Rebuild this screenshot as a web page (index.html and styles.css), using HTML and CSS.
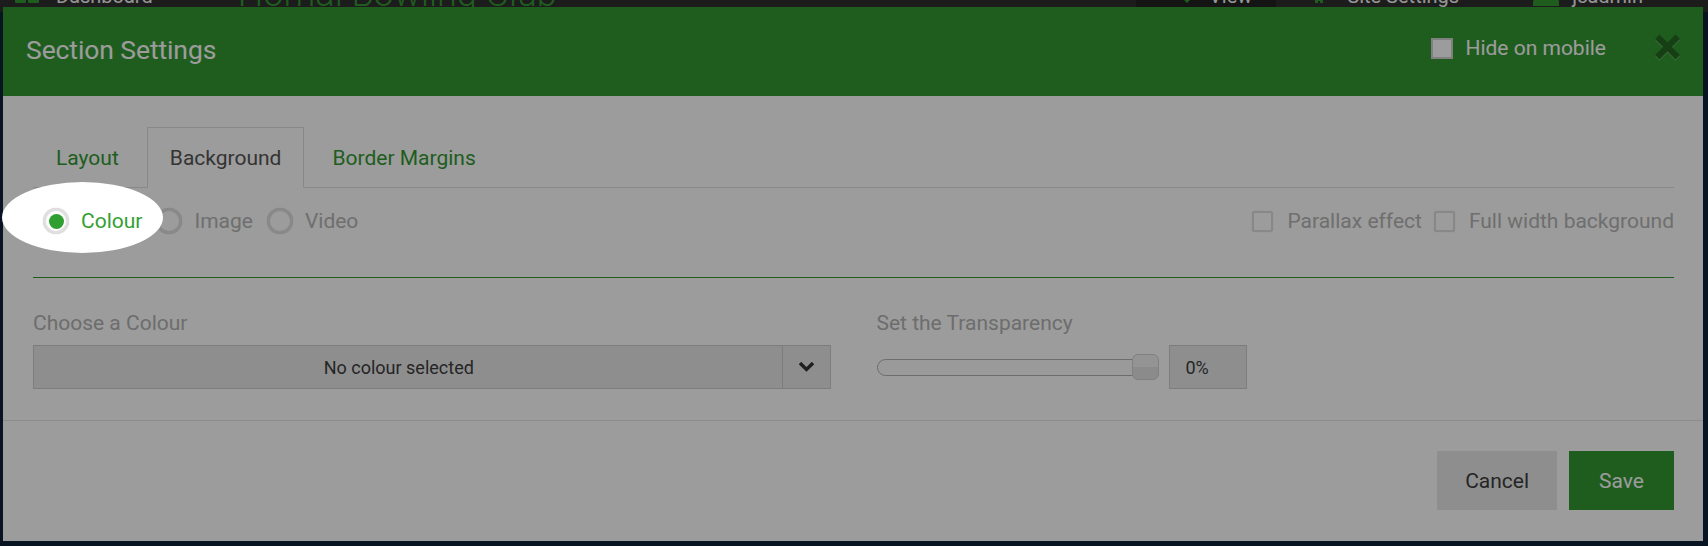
FILE: index.html
```html
<!DOCTYPE html>
<html lang="en">
<head>
<meta charset="utf-8">
<title>Section Settings</title>
<link rel="stylesheet" href="styles.css">
</head>
<body>
  <header class="topbar">
    <span class="nav-dash-icon"><i></i><i></i></span>
    <span class="nav-dash">Dashboard</span>
    <span class="site-title">Hornal Bowling Club</span>
    <nav class="nav-right">
      <span class="nav-item nav-view">
        <svg class="nav-icon" width="10" height="6" viewBox="0 0 10 6"><path d="M0 0 H10 L5 5 Z" fill="#339933"/></svg>
        <span>View</span>
      </span>
      <span class="nav-item nav-settings">
        <svg class="nav-icon" width="14" height="5" viewBox="0 0 14 5"><path d="M0 0 H14 V2 H11 V5 H8 V3 H6 V5 H3 V2 H0 Z" fill="#339933"/></svg>
        <span>Site Settings</span>
      </span>
      <span class="nav-item nav-user">
        <svg class="nav-icon" width="26" height="8" viewBox="0 0 26 8"><path d="M0 8 V4 Q0 0 6 0 H20 Q26 0 26 4 V8 Z" fill="#339933"/></svg>
        <span>jcadmin</span>
      </span>
    </nav>
  </header>

  <div class="modal">
    <div class="modal-header">
      <h1 class="modal-title">Section Settings</h1>
      <label class="hide-mobile"><span class="hm-box"></span>Hide on mobile</label>
      <button class="close" aria-label="Close">
        <svg width="25" height="27" viewBox="0 0 25 27"><path d="M4.5 5 L20.5 21 M20.5 5 L4.5 21" stroke="#246724" stroke-width="6.2" stroke-linecap="square" fill="none"/></svg>
      </button>
    </div>

    <div class="modal-body">
      <ul class="tabs">
        <li class="tab">Layout</li>
        <li class="tab active">Background</li>
        <li class="tab">Border Margins</li>
      </ul>

      <div class="bg-options">
        <div class="radios">
          <span class="radio checked"><span class="circle"><span class="dot"></span></span>Colour</span>
          <span class="radio"><span class="circle"></span>Image</span>
          <span class="radio"><span class="circle"></span>Video</span>
        </div>
        <div class="checks">
          <span class="check"><span class="box"></span>Parallax effect</span>
          <span class="check"><span class="box"></span>Full width background</span>
        </div>
      </div>

      <hr class="rule">

      <div class="fields">
        <div class="field">
          <span class="field-label">Choose a Colour</span>
          <div class="select">
            <span class="select-value">No colour selected</span>
            <span class="select-arrow">
              <svg width="15" height="10" viewBox="0 0 15 10"><path d="M2.2 2.2 L7.5 7.4 L12.8 2.2" stroke="#333" stroke-width="3.4" fill="none" stroke-linecap="square"/></svg>
            </span>
          </div>
        </div>
        <div class="field">
          <span class="field-label">Set the Transparency</span>
          <div class="range-row">
            <div class="slider">
              <span class="track"></span>
              <span class="handle"></span>
            </div>
            <span class="percent">0%</span>
          </div>
        </div>
      </div>
    </div>

    <div class="modal-footer">
      <button class="btn btn-cancel">Cancel</button>
      <button class="btn btn-save">Save</button>
    </div>
  </div>

  <div class="spotlight"></div>
</body>
</html>
```

FILE: styles.css
```css
* { box-sizing: border-box; }

html, body { margin: 0; padding: 0; }

body {
  width: 1708px;
  height: 546px;
  overflow: hidden;
  position: relative;
  background: #10223a;
  font-family: Roboto, "Liberation Sans", Arial, sans-serif;
}

/* ---------- page behind the modal ---------- */
.topbar {
  height: 12px;
  background: #2e2e2e;
  display: flex;
  align-items: flex-end;
  padding-left: 15px;
  color: #f4f4f4;
  line-height: 1;
  font-size: 20px;
}

.nav-dash-icon {
  display: flex;
  gap: 2px;
  margin-bottom: 9px;
}
.nav-dash-icon i {
  display: block;
  width: 11px;
  height: 11px;
  background: #339933;
  border-radius: 1px;
}

.nav-dash {
  margin-left: 17px;
  margin-bottom: 6px;
}

.site-title {
  margin-left: 85px;
  font-size: 36px;
  font-weight: 300;
  color: #339933;
}

.nav-right {
  margin-left: auto;
  margin-right: 65px;
  display: flex;
  align-items: flex-end;
  height: 12px;
}

.nav-item {
  display: flex;
  align-items: flex-end;
  height: 12px;
}
.nav-item span { margin-bottom: 6px; }
.nav-icon { display: block; }

.nav-view {
  background: #222;
  padding: 0 24px 0 46px;
  gap: 17px;
}
.nav-view .nav-icon { margin-bottom: 8px; }

.nav-settings {
  margin-left: 36px;
  gap: 21px;
}
.nav-settings .nav-icon { margin-bottom: 9px; }

.nav-user {
  margin-left: 74px;
  gap: 13px;
}
.nav-user .nav-icon { margin-bottom: 6px; }

/* ---------- modal ---------- */
.modal {
  position: absolute;
  left: 3px;
  top: 7px;
  width: 1700px;
  background: #fff;
}

.modal-header {
  height: 89px;
  background: #339933;
  display: flex;
  align-items: center;
  padding: 0 23px 5px 23px;
  color: #fff;
}

.modal-title {
  flex: 1;
  margin: 0;
  font-size: 26.5px;
  font-weight: 400;
  letter-spacing: -0.1px;
}

.hide-mobile {
  display: flex;
  align-items: center;
  gap: 12px;
  font-size: 21px;
  margin-right: 49px;
  margin-bottom: 2px;
}
.hm-box {
  width: 22px;
  height: 21px;
  background: #fff;
  border: 2px solid #d2d2d2;
}

.close {
  border: 0;
  background: none;
  padding: 0;
  margin-bottom: 3px;
  display: flex;
}
.close svg {
  display: block;
  filter: drop-shadow(0 1px 0 rgba(255, 255, 255, 0.28));
}

.modal-body {
  padding: 31px 29px 31px 30px;
}

/* tabs */
.tabs {
  display: flex;
  list-style: none;
  margin: 0;
  padding: 0;
  border-bottom: 1px solid #dedede;
}
.tab {
  height: 61px;
  margin-bottom: -1px;
  margin-right: 5px;
  padding: 0 22px;
  border: 1px solid transparent;
  display: flex;
  align-items: center;
  font-size: 21px;
  color: #339933;
}
.tab.active {
  border-color: #dedede #dedede #fff;
  background: #fff;
  color: #555;
}

/* background type options */
.bg-options {
  display: flex;
  justify-content: space-between;
  align-items: center;
  height: 26px;
  margin-top: 20px;
}

.radios {
  display: flex;
  gap: 14px;
  padding-left: 10px;
}
.radio {
  display: flex;
  align-items: center;
  gap: 12px;
  font-size: 21px;
  color: #b5b5b5;
}
.radio .circle {
  width: 26px;
  height: 26px;
  border-radius: 50%;
  border: 3px solid #e0e0e0;
  background: #fff;
  box-shadow: 0 0 1px rgba(0, 0, 0, 0.25);
  display: flex;
  align-items: center;
  justify-content: center;
}
.radio .dot {
  width: 15px;
  height: 15px;
  border-radius: 50%;
  background: #2f9f2f;
}
.radio.checked {
  position: relative;
  z-index: 11;
  color: #33a033;
}

.checks {
  display: flex;
  gap: 12px;
}
.check {
  display: flex;
  align-items: center;
  gap: 14px;
  font-size: 21px;
  color: #b5b5b5;
}
.check .box {
  width: 21px;
  height: 21px;
  border: 2px solid #dedede;
  border-radius: 3px;
  background: #fff;
  box-shadow: 0 0 1px rgba(0, 0, 0, 0.2);
}

.rule {
  margin: 43px 0 0;
  height: 0;
  border: 0;
  border-top: 1px solid #339933;
}

/* fields */
.fields {
  display: grid;
  grid-template-columns: 1fr 1fr;
  column-gap: 46px;
  margin-top: 33px;
}
.field-label {
  display: block;
  font-size: 21px;
  line-height: 25px;
  color: #b3b3b3;
  margin-bottom: 9px;
}

.select {
  display: flex;
  height: 44px;
  border: 1px solid #cdcdcd;
  background: #e8e8e8;
}
.select-value {
  flex: 1;
  display: flex;
  align-items: center;
  justify-content: center;
  padding-right: 18px;
  font-size: 18px;
  color: #3d3d3d;
}
.select-arrow {
  width: 48px;
  border-left: 1px solid #cdcdcd;
  display: flex;
  align-items: center;
  justify-content: center;
}
.select-arrow svg { display: block; }

.range-row {
  display: flex;
  align-items: center;
  gap: 10px;
  height: 44px;
}
.slider {
  display: flex;
  align-items: center;
  width: 282px;
}
.track {
  flex: 1;
  height: 17px;
  margin-right: -24px;
  border: 1px solid #b3b3b3;
  border-radius: 9px;
  background: #fcfcfc;
}
.handle {
  width: 27px;
  height: 26px;
  border: 1px solid #d2d2d2;
  border-radius: 6px;
  background: linear-gradient(#f2f2f2 50%, #e3e3e3 50%);
}
.percent {
  width: 78px;
  height: 44px;
  border: 1px solid #cdcdcd;
  background: #e8e8e8;
  padding-left: 16px;
  display: flex;
  align-items: center;
  font-size: 18px;
  color: #3d3d3d;
}

/* footer */
.modal-footer {
  border-top: 1px solid #e5e5e5;
  padding: 30px 29px 31px;
  display: flex;
  justify-content: flex-end;
  gap: 12px;
}
.btn {
  height: 59px;
  border: 0;
  padding: 0 28px;
  font-family: inherit;
  font-size: 21px;
}
.btn-cancel {
  background: #e9e9e9;
  color: #3d3d3d;
}
.btn-save {
  background: #339933;
  color: #fff;
  padding: 0 30px;
}

/* guided-tour highlight */
.spotlight {
  position: absolute;
  left: 2px;
  top: 182px;
  width: 161px;
  height: 71px;
  border-radius: 50%;
  background: #fff;
  box-shadow: 0 0 0 3000px rgba(0, 0, 0, 0.39);
  z-index: 10;
}
```
